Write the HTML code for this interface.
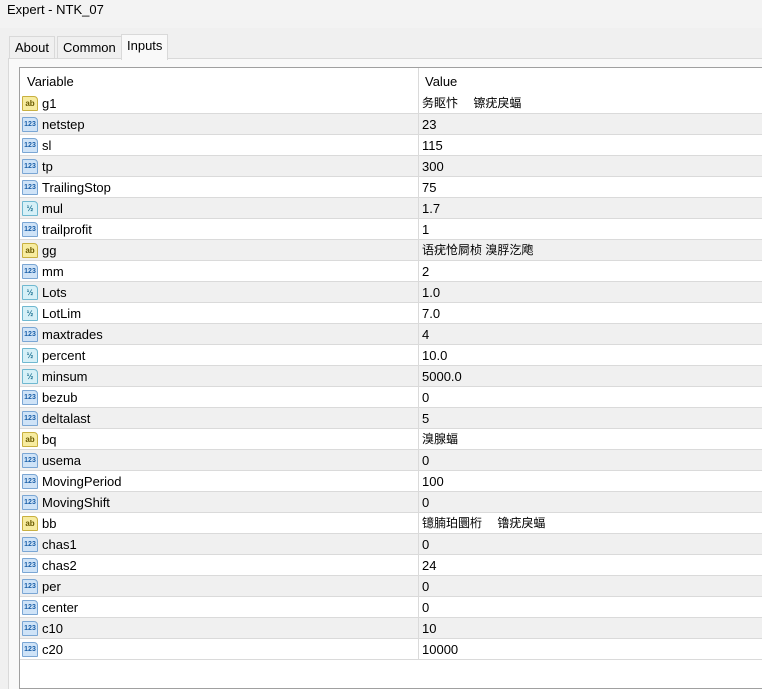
<!DOCTYPE html><html><head><style>
body{margin:0;width:762px;height:683px;background:#f0f0f0;font-family:"Liberation Sans","Noto Sans CJK SC",sans-serif;font-size:13px;color:#000;position:relative;overflow:hidden}
.title{position:absolute;left:0;top:0;width:762px;height:28px;background:#f3f3f3}
.title span{position:absolute;left:7px;top:2px;font-size:13px}
.tab{position:absolute;top:36px;height:22px;line-height:21px;padding:0 5px;border:1px solid #d9d9d9;border-bottom:none;background:#f0f0f0;font-size:13px}
.panel{position:absolute;left:8px;top:58px;width:760px;height:630px;background:#f9f9f9;border-top:1px solid #d9d9d9;border-left:1px solid #d9d9d9}
.list{position:absolute;left:19px;top:67px;width:750px;height:620px;background:#fff;border:1px solid #a0a0a0}
.hdr div{position:absolute;top:6px;font-size:13px}
.col{position:absolute;left:398px;top:0;width:1px;height:592px;background:#dadada}
.row{position:absolute;left:0;width:750px;height:20px;border-bottom:1px solid #dadada;margin-top:1px}
.row.g{background:#f0f0f0}
.n{position:absolute;left:22px;top:3px;line-height:15px}
.v{position:absolute;left:402px;top:3px;font-size:13px;line-height:15px}
.v.c{font-size:12px}
.ic{position:absolute;left:2px;top:3px;width:14px;height:13px;border:1px solid #7aa6d4;background:#cfe3f7;font-size:7px;line-height:13px;text-align:center;color:#1a5fa8;font-weight:bold;border-radius:1px 4px 1px 1px}
.ic.a{background:#f7eca0;border-color:#c8b040;color:#6a5a00;font-size:8px}
.ic.h{background:#d6f0f7;border-color:#6fb8d0;color:#1a6f90;font-size:8px}
</style></head><body>
<div class="title"><span>Expert - NTK_07</span></div>
<div class="tab" style="left:9px">About</div>
<div class="tab" style="left:57px">Common</div>
<div class="tab" style="left:121px;top:34px;height:25px;background:#f9f9f9;z-index:2">Inputs</div>
<div class="panel"></div>
<div class="list">
<div class="hdr"><div style="left:7px">Variable</div><div style="left:405px">Value</div></div>
<div class="row" style="top:24px"><span class="ic a">ab</span><span class="n">g1</span><span class="v c">务眍忭　 镲疣戾蝠</span></div>
<div class="row g" style="top:45px"><span class="ic">123</span><span class="n">netstep</span><span class="v">23</span></div>
<div class="row" style="top:66px"><span class="ic">123</span><span class="n">sl</span><span class="v">115</span></div>
<div class="row g" style="top:87px"><span class="ic">123</span><span class="n">tp</span><span class="v">300</span></div>
<div class="row" style="top:108px"><span class="ic">123</span><span class="n">TrailingStop</span><span class="v">75</span></div>
<div class="row g" style="top:129px"><span class="ic h">½</span><span class="n">mul</span><span class="v">1.7</span></div>
<div class="row" style="top:150px"><span class="ic">123</span><span class="n">trailprofit</span><span class="v">1</span></div>
<div class="row g" style="top:171px"><span class="ic a">ab</span><span class="n">gg</span><span class="v c">语疣怆屙桢 溴脬汔飑</span></div>
<div class="row" style="top:192px"><span class="ic">123</span><span class="n">mm</span><span class="v">2</span></div>
<div class="row g" style="top:213px"><span class="ic h">½</span><span class="n">Lots</span><span class="v">1.0</span></div>
<div class="row" style="top:234px"><span class="ic h">½</span><span class="n">LotLim</span><span class="v">7.0</span></div>
<div class="row g" style="top:255px"><span class="ic">123</span><span class="n">maxtrades</span><span class="v">4</span></div>
<div class="row" style="top:276px"><span class="ic h">½</span><span class="n">percent</span><span class="v">10.0</span></div>
<div class="row g" style="top:297px"><span class="ic h">½</span><span class="n">minsum</span><span class="v">5000.0</span></div>
<div class="row" style="top:318px"><span class="ic">123</span><span class="n">bezub</span><span class="v">0</span></div>
<div class="row g" style="top:339px"><span class="ic">123</span><span class="n">deltalast</span><span class="v">5</span></div>
<div class="row" style="top:360px"><span class="ic a">ab</span><span class="n">bq</span><span class="v c">溴腺蝠</span></div>
<div class="row g" style="top:381px"><span class="ic">123</span><span class="n">usema</span><span class="v">0</span></div>
<div class="row" style="top:402px"><span class="ic">123</span><span class="n">MovingPeriod</span><span class="v">100</span></div>
<div class="row g" style="top:423px"><span class="ic">123</span><span class="n">MovingShift</span><span class="v">0</span></div>
<div class="row" style="top:444px"><span class="ic a">ab</span><span class="n">bb</span><span class="v c">镱腩珀圜桁　 镥疣戾蝠</span></div>
<div class="row g" style="top:465px"><span class="ic">123</span><span class="n">chas1</span><span class="v">0</span></div>
<div class="row" style="top:486px"><span class="ic">123</span><span class="n">chas2</span><span class="v">24</span></div>
<div class="row g" style="top:507px"><span class="ic">123</span><span class="n">per</span><span class="v">0</span></div>
<div class="row" style="top:528px"><span class="ic">123</span><span class="n">center</span><span class="v">0</span></div>
<div class="row g" style="top:549px"><span class="ic">123</span><span class="n">c10</span><span class="v">10</span></div>
<div class="row" style="top:570px"><span class="ic">123</span><span class="n">c20</span><span class="v">10000</span></div>
<div class="col"></div>
</div>
</body></html>
